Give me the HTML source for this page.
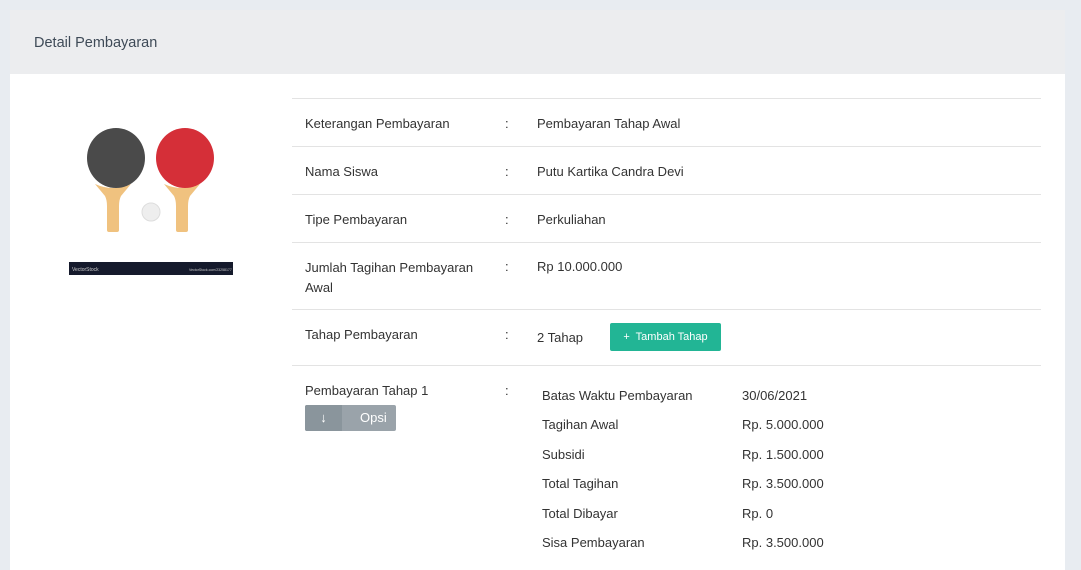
<!DOCTYPE html>
<html><head><style>
body{margin:0;background:#e8ecf1;font-family:"Liberation Sans",sans-serif;font-size:13px;color:#333;width:1081px;height:563px;overflow:hidden;position:relative}
.card{position:absolute;left:10px;top:10px;width:1055px;height:560px;background:#fff}
.hd{height:64px;background:#ecedef;}
.hd span{position:absolute;left:24px;top:25px;font-size:14.5px;color:#3e4a57}
.abs{position:absolute}
.line{position:absolute;left:292px;width:749px;height:1px;background:#e3e3e3}
.t{position:absolute;white-space:nowrap}
</style></head><body>
<div class="card"><div class="hd"><span>Detail Pembayaran</span></div></div>
<svg class="abs" style="left:69px;top:120px" width="164" height="155" viewBox="0 0 164 155">
<path d="M26 64 Q44 72 62 64 L52 76 Q50 80 50 86 L50 110 Q50 112 48 112 L40 112 Q38 112 38 110 L38 86 Q38 80 36 76 Z" fill="#f0c27f"/>
<ellipse cx="47" cy="38" rx="29" ry="30" fill="#4a4a4a"/>
<path d="M95 64 Q113 72 131 64 L121 76 Q119 80 119 86 L119 110 Q119 112 117 112 L109 112 Q107 112 107 110 L107 86 Q107 80 105 76 Z" fill="#f0c27f"/>
<ellipse cx="116" cy="38" rx="29" ry="30" fill="#d52f38"/>
<circle cx="82" cy="92" r="9" fill="#eee" stroke="#ddd"/>
<rect x="0" y="142" width="164" height="13" fill="#151a2c"/>
<text x="3" y="151" font-size="5" fill="#ccc" font-family="Liberation Sans">VectorStock</text>
<text x="120" y="151" font-size="3.5" fill="#ccc" font-family="Liberation Sans">VectorStock.com/23258177</text>
</svg>
<div class="line" style="top:98px"></div>
<div class="line" style="top:146px"></div>
<div class="line" style="top:194px"></div>
<div class="line" style="top:242px"></div>
<div class="line" style="top:309px"></div>
<div class="line" style="top:365px"></div>
<div class="t" style="left:305px;top:116px">Keterangan Pembayaran</div>
<div class="t" style="left:505px;top:116px">:</div>
<div class="t" style="left:537px;top:116px">Pembayaran Tahap Awal</div>
<div class="t" style="left:305px;top:164px">Nama Siswa</div>
<div class="t" style="left:505px;top:164px">:</div>
<div class="t" style="left:537px;top:164px">Putu Kartika Candra Devi</div>
<div class="t" style="left:305px;top:212px">Tipe Pembayaran</div>
<div class="t" style="left:505px;top:212px">:</div>
<div class="t" style="left:537px;top:212px">Perkuliahan</div>
<div class="t" style="left:305px;top:258px;line-height:20px">Jumlah Tagihan Pembayaran<br>Awal</div>
<div class="t" style="left:505px;top:259px">:</div>
<div class="t" style="left:537px;top:259px">Rp 10.000.000</div>
<div class="t" style="left:305px;top:327px">Tahap Pembayaran</div>
<div class="t" style="left:505px;top:327px">:</div>
<div class="t" style="left:537px;top:330px">2 Tahap</div>
<div class="abs" style="left:610px;top:323px;width:111px;height:28px;background:#22b595;border-radius:2px;color:#fff;font-size:11px;line-height:28px;text-align:center">+&nbsp; Tambah Tahap</div>
<div class="t" style="left:305px;top:383px">Pembayaran Tahap 1</div>
<div class="t" style="left:505px;top:383px">:</div>
<div class="abs" style="left:305px;top:405px;width:91px;height:26px;background:#9aa3aa;border-radius:2px;color:#fff;font-size:13px;line-height:26px">
<div class="abs" style="left:0;top:0;width:37px;height:26px;background:#8a959c;border-radius:2px 0 0 2px;text-align:center">↓</div>
<span class="abs" style="left:55px">Opsi</span></div>
<div class="t" style="left:542px;top:388px">Batas Waktu Pembayaran</div><div class="t" style="left:742px;top:388px">30/06/2021</div>
<div class="t" style="left:542px;top:417px">Tagihan Awal</div><div class="t" style="left:742px;top:417px">Rp. 5.000.000</div>
<div class="t" style="left:542px;top:447px">Subsidi</div><div class="t" style="left:742px;top:447px">Rp. 1.500.000</div>
<div class="t" style="left:542px;top:476px">Total Tagihan</div><div class="t" style="left:742px;top:476px">Rp. 3.500.000</div>
<div class="t" style="left:542px;top:506px">Total Dibayar</div><div class="t" style="left:742px;top:506px">Rp. 0</div>
<div class="t" style="left:542px;top:535px">Sisa Pembayaran</div><div class="t" style="left:742px;top:535px">Rp. 3.500.000</div>
</body></html>
